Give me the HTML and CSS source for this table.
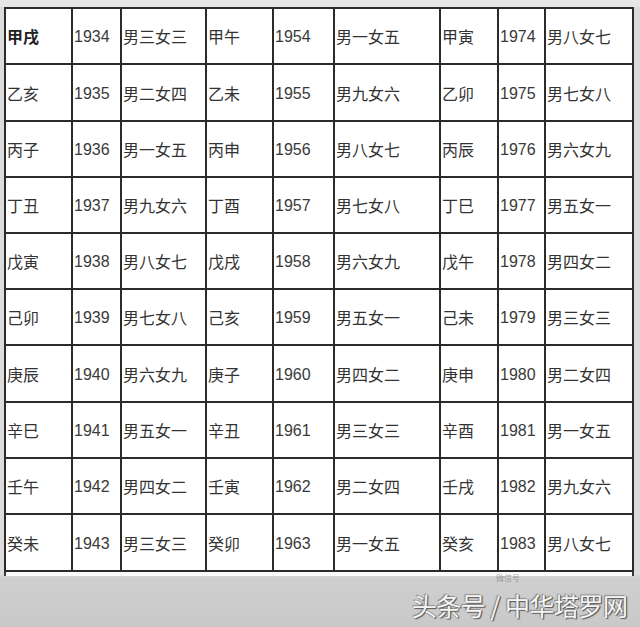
FILE: index.html
```html
<!DOCTYPE html>
<html lang="zh">
<head>
<meta charset="utf-8">
<title>干支年份表</title>
<link rel="stylesheet" href="styles.css">
</head>
<body>
<div class="page">
  <div class="sheet">
    <div class="grid">
      <div class="c b">甲戌</div><div class="c n">1934</div><div class="c">男三女三</div><div class="c">甲午</div><div class="c n">1954</div><div class="c">男一女五</div><div class="c">甲寅</div><div class="c n">1974</div><div class="c">男八女七</div>
      <div class="c">乙亥</div><div class="c n">1935</div><div class="c">男二女四</div><div class="c">乙未</div><div class="c n">1955</div><div class="c">男九女六</div><div class="c">乙卯</div><div class="c n">1975</div><div class="c">男七女八</div>
      <div class="c">丙子</div><div class="c n">1936</div><div class="c">男一女五</div><div class="c">丙申</div><div class="c n">1956</div><div class="c">男八女七</div><div class="c">丙辰</div><div class="c n">1976</div><div class="c">男六女九</div>
      <div class="c">丁丑</div><div class="c n">1937</div><div class="c">男九女六</div><div class="c">丁酉</div><div class="c n">1957</div><div class="c">男七女八</div><div class="c">丁巳</div><div class="c n">1977</div><div class="c">男五女一</div>
      <div class="c">戊寅</div><div class="c n">1938</div><div class="c">男八女七</div><div class="c">戊戌</div><div class="c n">1958</div><div class="c">男六女九</div><div class="c">戊午</div><div class="c n">1978</div><div class="c">男四女二</div>
      <div class="c">己卯</div><div class="c n">1939</div><div class="c">男七女八</div><div class="c">己亥</div><div class="c n">1959</div><div class="c">男五女一</div><div class="c">己未</div><div class="c n">1979</div><div class="c">男三女三</div>
      <div class="c">庚辰</div><div class="c n">1940</div><div class="c">男六女九</div><div class="c">庚子</div><div class="c n">1960</div><div class="c">男四女二</div><div class="c">庚申</div><div class="c n">1980</div><div class="c">男二女四</div>
      <div class="c">辛巳</div><div class="c n">1941</div><div class="c">男五女一</div><div class="c">辛丑</div><div class="c n">1961</div><div class="c">男三女三</div><div class="c">辛酉</div><div class="c n">1981</div><div class="c">男一女五</div>
      <div class="c">壬午</div><div class="c n">1942</div><div class="c">男四女二</div><div class="c">壬寅</div><div class="c n">1962</div><div class="c">男二女四</div><div class="c">壬戌</div><div class="c n">1982</div><div class="c">男九女六</div>
      <div class="c">癸未</div><div class="c n">1943</div><div class="c">男三女三</div><div class="c">癸卯</div><div class="c n">1963</div><div class="c">男一女五</div><div class="c">癸亥</div><div class="c n">1983</div><div class="c">男八女七</div>
    </div>
    <div class="tail"></div>
  </div>
  <div class="watermark">
    <span class="wm-ghost">微信号</span>
    <span class="wm-main">头条号 / 中华塔罗网</span>
  </div>
</div>
</body>
</html>
```

FILE: styles.css
```css
html, body {
  margin: 0;
  padding: 0;
}
body {
  width: 640px;
  height: 627px;
  overflow: hidden;
  background: #d2d2d2;
  font-family: "Noto Sans CJK SC", "Noto Sans", sans-serif;
}
.page {
  position: relative;
  width: 640px;
  height: 627px;
  background: linear-gradient(to bottom, #e6e6e6 0, #e6e6e6 7px, #dcdcdc 7px, #dcdcdc 574px, #cfcfcf 578px, #c9c9c9 627px);
  padding-top: 7px;
  box-sizing: border-box;
}
.sheet {
  margin-left: 4px;
  width: 630px;
}
.grid {
  display: grid;
  grid-template-columns: 65px 47px 83px 65px 59px 104px 56px 45px 86px;
  grid-template-rows: 54px 55px 54px 54px 54px 54px 55px 54px 54px 55px;
  gap: 2px;
  padding: 2px;
  background: #2b2b2b;
}
.c {
  background: #fff;
  color: #333;
  font-size: 16px;
  line-height: 1;
  display: flex;
  align-items: center;
  padding-left: 1px;
  white-space: nowrap;
  overflow: hidden;
}
.c.n {
  font-family: "Liberation Sans", "Noto Sans", sans-serif;
  font-size: 16px;
  color: #3a3a3a;
  padding-left: 1px;
  padding-top: 2px;
}
.c.b {
  font-weight: bold;
  color: #222;
}
.tail {
  height: 4px;
  background: #fafafa;
  border-left: 2px solid #3a3a3a;
  border-right: 2px solid #3a3a3a;
}
.watermark {
  position: absolute;
  left: 412px;
  top: 577px;
  width: 220px;
  height: 46px;
}
.wm-main {
  position: absolute;
  left: 0;
  top: 15px;
  font-size: 25px;
  line-height: 26px;
  color: #f6f6f6;
  white-space: nowrap;
  letter-spacing: -0.5px;
  text-shadow: 1px 1px 1px #555, -1px -1px 1px #8a8a8a, 1px 0 0 #777;
}
.wm-ghost {
  position: absolute;
  left: 84px;
  top: -4px;
  font-size: 8px;
  line-height: 9px;
  color: rgba(90, 90, 90, 0.5);
  white-space: nowrap;
}
```
